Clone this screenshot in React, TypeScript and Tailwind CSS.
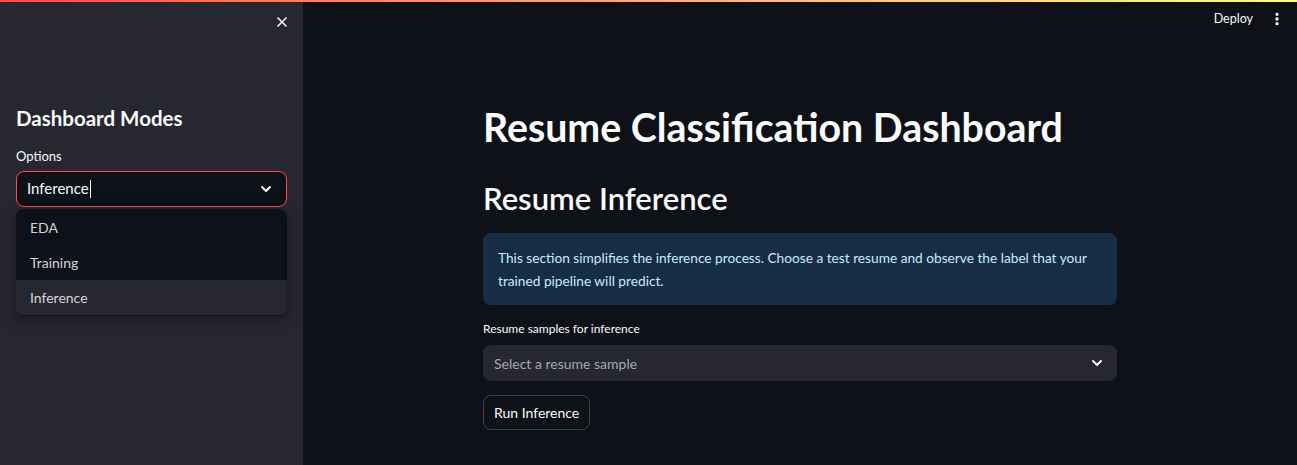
import { ChevronDown, EllipsisVertical, X } from "lucide-react";

const font = { fontFamily: "Lato, 'Noto Sans', sans-serif" };

function SidebarSelect() {
  return (
    <div className="relative">
      <div className="flex h-[36px] items-center justify-between rounded-lg border border-[#ff4b4b] bg-[#0e1117] pl-[10px] pr-[12px]">
        <span className="flex items-center text-[15px] text-[#fafafa]">
          Inference
          <span className="ml-[1px] h-[18px] w-px bg-[#fafafa]" />
        </span>
        <ChevronDown size={16} strokeWidth={3} className="text-[#fafafa]" />
      </div>
      <div className="absolute left-0 right-0 top-[38px] overflow-hidden rounded-lg bg-[#0e1117] py-px shadow-[0_4px_16px_rgba(0,0,0,0.4)]">
        {["EDA", "Training", "Inference"].map((o, i) => (
          <div
            key={o}
            className={
              "flex h-[35px] items-center px-[14px] text-[14px] text-[#d5d5d8] " +
              (i === 2 ? "bg-[#262730]" : "")
            }
          >
            {o}
          </div>
        ))}
      </div>
    </div>
  );
}

export default function App() {
  return (
    <div className="relative flex h-[465px] w-[1297px] overflow-hidden bg-[#0e1117]" style={font}>
      <div className="absolute left-0 right-0 top-0 h-[2px] bg-gradient-to-r from-[#ff4b4b] to-[#fffd80]" />
      <aside className="flex w-[303px] shrink-0 flex-col bg-[#262730] px-4">
        <div className="flex justify-end pt-[14px]">
          <X size={16} strokeWidth={2.5} className="mr-[-3px] text-[#fafafa]" />
        </div>
        <h2 className="mt-[73px] text-[20.5px] font-bold leading-[30px] text-[#fafafa]">Dashboard Modes</h2>
        <div className="mt-[14px] text-[13px] text-[#fafafa]">Options</div>
        <div className="mt-[4px]">
          <SidebarSelect />
        </div>
      </aside>
      <main className="relative flex-1">
        <div className="absolute right-[12px] top-[10px] flex items-center gap-[16px] text-[#fafafa]">
          <span className="text-[12.5px]">Deploy</span>
          <EllipsisVertical size={16} strokeWidth={3} />
        </div>
        <div className="mx-auto w-[634px] pt-[100px]">
          <h1 className="text-[39.3px] font-bold leading-[54px] text-[#fafafa]">Resume Classification Dashboard</h1>
          <h2 className="mt-[24px] text-[31px] font-semibold leading-[40px] text-[#fafafa]">Resume Inference</h2>
          <div className="mt-[15px] rounded-lg bg-[#172d43] px-[15px] py-[13px] text-[13.7px] leading-[23px] text-[#c7ebff]">
            This section simplifies the inference process. Choose a test resume and observe the label that your
            trained pipeline will predict.
          </div>
          <div className="mt-[16px] text-[12px] leading-[16px] text-[#fafafa]">Resume samples for inference</div>
          <div className="mt-[8px] flex h-[36px] items-center justify-between rounded-lg bg-[#262730] pl-[11px] pr-[12px]">
            <span className="text-[14px] text-[#a3a8b8]">Select a resume sample</span>
            <ChevronDown size={16} strokeWidth={3} className="text-[#fafafa]" />
          </div>
          <button className="mt-[14px] h-[35px] rounded-lg border border-[#fafafa]/20 px-[10px] text-[14px] text-[#fafafa]">
            Run Inference
          </button>
        </div>
      </main>
    </div>
  );
}
